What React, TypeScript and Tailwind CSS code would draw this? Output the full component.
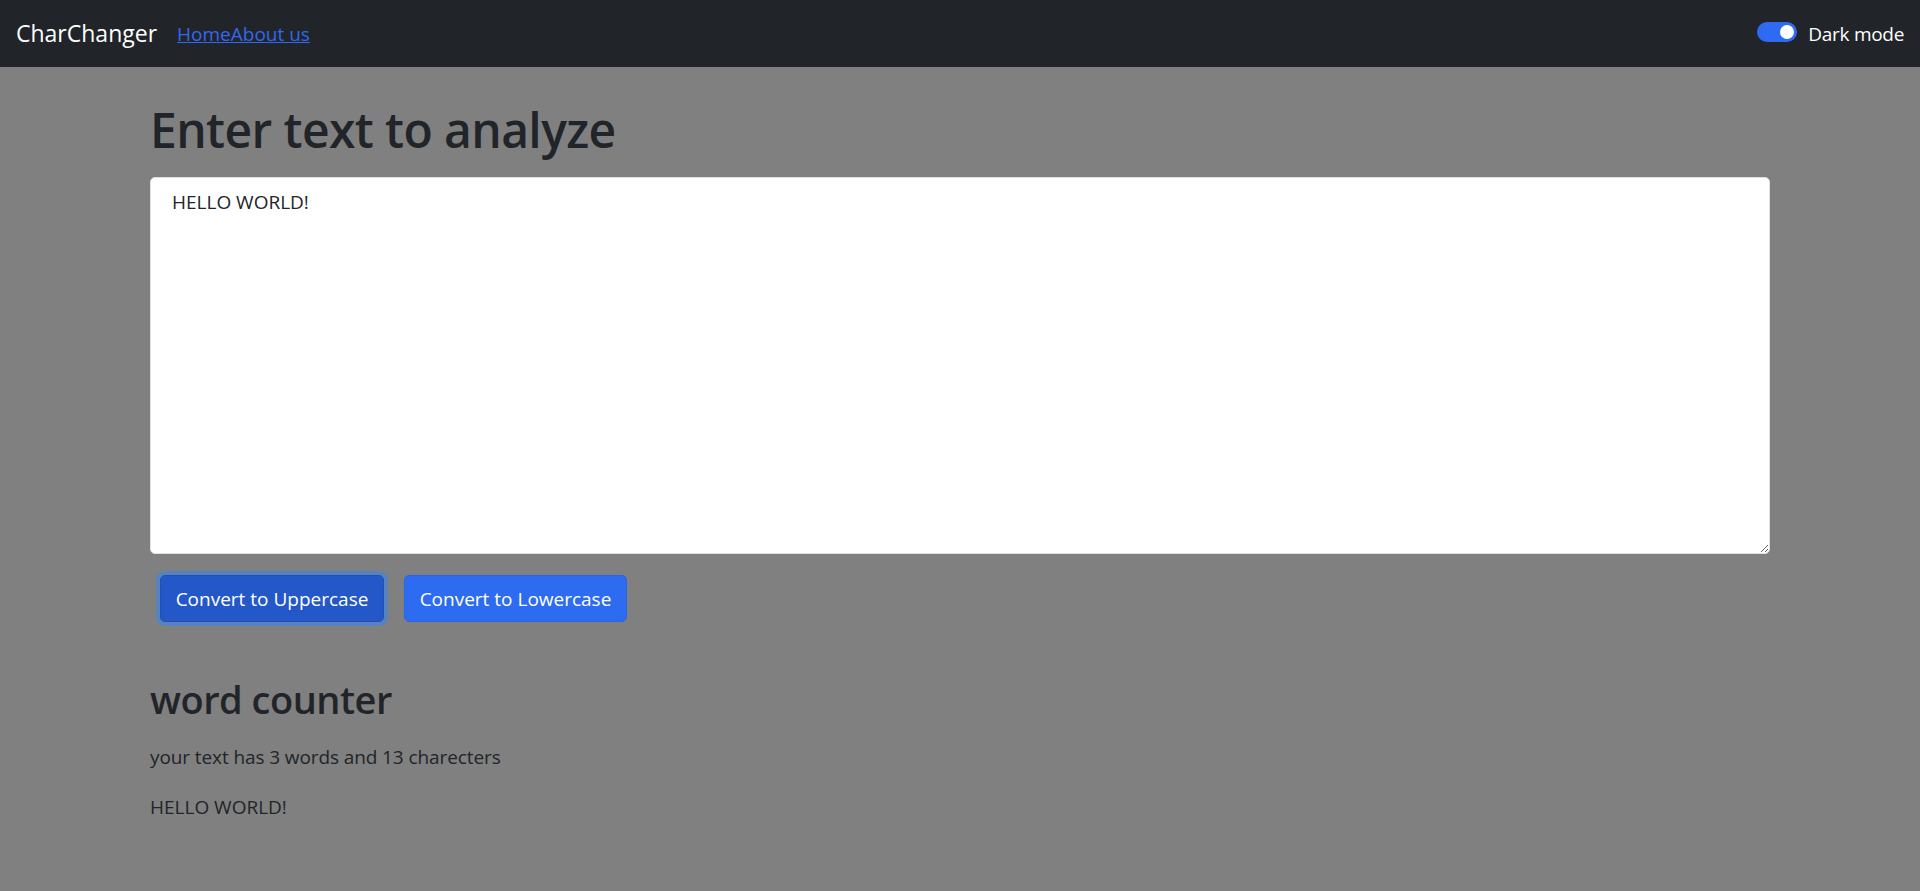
import React, { useState } from "react";

export default function App() {
  const [text, setText] = useState("HELLO WORLD! ");
  const [dark, setDark] = useState(true);
  const words = text.split(" ").length;
  const chars = text.length;

  return (
    <div className="min-h-[891px] bg-[#808080] font-['Open_Sans',sans-serif] text-[#212529]">
      <nav className="h-[67px] bg-[#212529] flex items-center justify-between pl-[16px] pr-[16px]">
        <div className="flex items-center">
          <a href="#" className="text-[23px] leading-[30px] text-white no-underline mr-[20px] -mt-[2px]">
            CharChanger
          </a>
          <div className="flex items-center">
            <a href="#" className="text-[19px] leading-[30px] text-[#3068f0] underline">
              Home
            </a>
            <a href="#" className="text-[19px] leading-[30px] text-[#3068f0] underline">
              About us
            </a>
          </div>
        </div>
        <div className="flex items-center">
          <button
            type="button"
            onClick={() => setDark(!dark)}
            className="relative w-[40px] h-[20px] rounded-full bg-[#2f6bf2] flex items-center -mt-[3px]"
          >
            <span className="absolute right-[3px] top-[3px] w-[14px] h-[14px] rounded-full bg-white" />
          </button>
          <span className="ml-[11px] text-[19px] leading-[30px] tracking-[-0.3px] text-white">Dark mode</span>
        </div>
      </nav>

      <main className="w-[1620px] mx-auto">
        <h1 className="mt-[33px] text-[48px] leading-[60px] font-semibold tracking-[-0.6px] text-[#212529]">
          Enter text to analyze
        </h1>
        <textarea
          value={text}
          onChange={(e) => setText(e.target.value)}
          className="mt-[17px] block w-[1620px] h-[377px] bg-white border border-[#dee2e6] rounded-[5px] pt-[9px] px-[21px] text-[19px] leading-[30px] text-[#212529] outline-none"
        />
        <div className="mt-[21px] flex items-center">
          <button
            type="button"
            onClick={() => setText(text.toUpperCase())}
            className="ml-[10px] w-[224px] h-[47px] rounded-[5px] bg-[#2458c8] border border-[#1e4fb8] text-white text-[19px] leading-[30px] ring-[4px] ring-[#5882be]"
          >
            Convert to Uppercase
          </button>
          <button
            type="button"
            onClick={() => setText(text.toLowerCase())}
            className="ml-[20px] w-[223px] h-[47px] rounded-[5px] bg-[#2d6bf1] border border-[#2a65e6] text-white text-[19px] leading-[30px]"
          >
            Convert to Lowercase
          </button>
        </div>

        <h2 className="mt-[53px] text-[38px] leading-[48px] font-semibold tracking-[-0.5px] text-[#212529]">
          word counter
        </h2>
        <p className="mt-[19px] text-[19px] leading-[30px] tracking-[-0.1px] text-[#212529]">
          your text has {words} words and {chars} charecters
        </p>
        <p className="mt-[20px] text-[19px] leading-[30px] text-[#212529]">{text}</p>
      </main>
    </div>
  );
}
